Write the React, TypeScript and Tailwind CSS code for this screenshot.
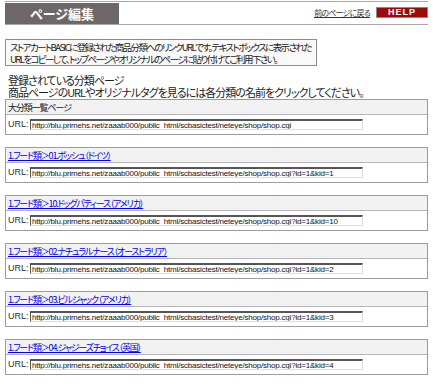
const JP = "font-['Noto_Sans_CJK_JP','Noto_Sans',sans-serif] [font-feature-settings:'palt']";
const URL_FONT = "font-['Liberation_Sans',sans-serif]";

const BASE = "http://blu.primehs.net/zaaab000/public_html/scbasictest/neteye/shop/shop.cgi";

const categories = [
  { name: "1.フード類＞01.ボッシュ（ドイツ）", kid: "1" },
  { name: "1.フード類＞10.ドッグパティース（アメリカ）", kid: "10" },
  { name: "1.フード類＞02.ナチュラルナース（オーストラリア）", kid: "2" },
  { name: "1.フード類＞03.ビルジャック（アメリカ）", kid: "3" },
  { name: "1.フード類＞04.ジャジーズチョイス（英国）", kid: "4" },
];

function UrlBox({ title, url, link }: { title: string; url: string; link?: boolean }) {
  return (
    <div className="border border-[#9c9c9c] bg-white">
      <div className="h-[15px] bg-[#f2f2f2] border-b border-[#b5b5b5] px-[2px] flex items-center">
        {link ? (
          <a href="#" className="text-[9px] tracking-[-1.2px] leading-none text-[#0000ee] underline">
            {title}
          </a>
        ) : (
          <span className="text-[9px] tracking-[-1.1px] leading-none text-[#222]">{title}</span>
        )}
      </div>
      <div className="h-[19px] flex items-center pl-[2px]">
        <span className={`${URL_FONT} text-[9px] text-[#333] w-[22px] shrink-0`}>URL:</span>
        <input
          readOnly
          value={url}
          className={`${URL_FONT} w-[333px] h-[11px] px-[1px] text-[8px] tracking-[-0.2px] leading-none text-[#111] bg-white border-l border-t-2 border-l-[#555] border-t-[#555] border-r border-b border-r-[#ddd] border-b-[#ddd] outline-none`}
        />
      </div>
    </div>
  );
}

export default function App() {
  return (
    <div className={`${JP} w-[433px] h-[388px] bg-white text-black overflow-hidden`}>
      <div className="pt-px px-[5px]">
        <div className="border-t border-b border-[#a8a8a8] h-[24px] flex items-start justify-between">
          <div className="mt-px h-[21px] w-[114px] bg-[#6e6768] flex items-center justify-center">
            <span className="text-[13px] font-bold text-white leading-none">ページ編集</span>
          </div>
          <div className="flex items-center gap-[6px] mt-[5px]">
            <a href="#" className="text-[8px] tracking-[-0.8px] leading-none text-[#333] underline">
              前のページに戻る
            </a>
            <div className="w-[52px] h-[11px] bg-[#9d0a0a] border border-[#8a8a8a] flex items-center justify-center">
              <span className="font-['Liberation_Sans',sans-serif] text-[9px] font-bold leading-none text-white tracking-[1px]">
                HELP
              </span>
            </div>
          </div>
        </div>

        <div className="mt-[14px] w-[312px] border border-[#8c8c8c] bg-[#f9f9f9] pl-[4px] pt-px text-[9.5px] tracking-[-1.6px] leading-[12px] text-[#222]">
          <p className="whitespace-nowrap">ストアカートBASICに登録された商品分類へのリンクURLです。テキストボックスに表示された</p>
          <p className="whitespace-nowrap">URLをコピーして、トップページやオリジナルのページに貼り付けてご利用下さい。</p>
        </div>

        <div className="mt-[8px] pl-[3px] text-[11px] tracking-[-1px] leading-[12px] text-[#222]">
          <p className="whitespace-nowrap">登録されている分類ページ</p>
          <p className="whitespace-nowrap">商品ページのURLやオリジナルタグを見るには各分類の名前をクリックしてください。</p>
        </div>

        <div className="mt-px flex flex-col gap-[12px]">
          <UrlBox title="大分類一覧ページ" url={BASE} />
          {categories.map((c) => (
            <UrlBox key={c.kid} title={c.name} url={`${BASE}?id=1&kid=${c.kid}`} link />
          ))}
        </div>
      </div>
    </div>
  );
}
